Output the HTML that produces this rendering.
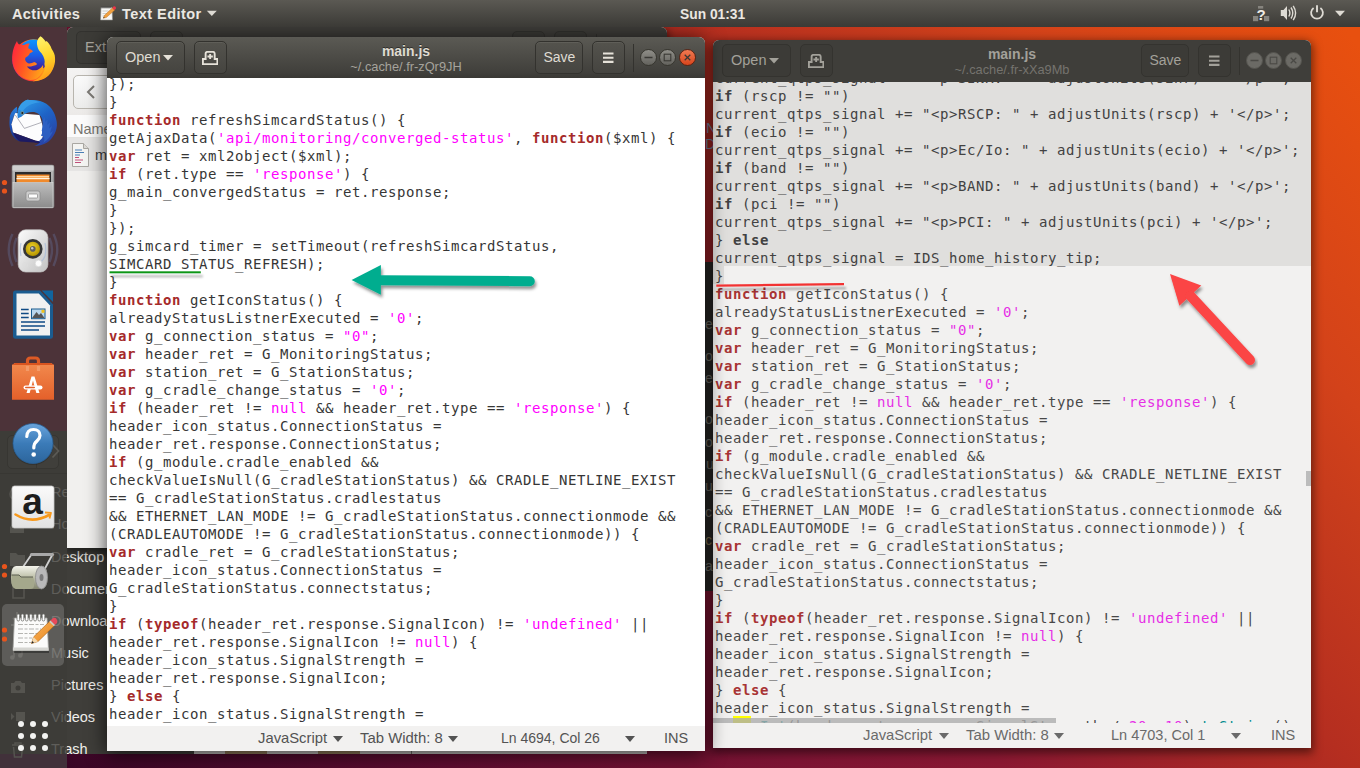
<!DOCTYPE html>
<html><head><meta charset="utf-8"><title>Text Editor</title>
<style>
*{box-sizing:border-box;margin:0;padding:0}
html,body{width:1360px;height:768px;overflow:hidden;background:#300a24}
body{position:relative;font-family:"Liberation Sans","DejaVu Sans",sans-serif;font-size:14px;color:#3c3c3c}
.abs{position:absolute}
#wall{left:0;top:0;width:1360px;height:768px;
 background:linear-gradient(48deg,#2c0420 0%,#3a0626 4%,#5e0c30 22%,#7c1433 39%,#8a1832 49%,#b52e20 66%,#c83c1c 77%,#d3421a 82%,#e8500f 98%);}
/* top bar */
#top{left:0;top:0;width:1360px;height:27px;background:linear-gradient(#5b5953,#3b3a36);color:#ebe8e2;font-weight:bold}
#top span{position:absolute;top:5.700px;white-space:nowrap;line-height:17px}
/* dock */
#dock{left:0;top:27px;width:67px;height:741px;overflow:hidden}
.dim{left:51px;font-size:14.5px;color:#5f5e5a;white-space:nowrap;width:16px;overflow:hidden}
/* windows */
.win{overflow:hidden;border-radius:6px 6px 0 0;box-shadow:0 3px 10px 2px rgba(0,0,0,.5)}
.hdr{left:0;top:0;width:100%;height:41px;background:linear-gradient(#56554f,#3d3c38);color:#dfdbd2}
.hb{position:absolute;top:4px;height:33px;border:1px solid #302f2c;border-radius:5px;background:linear-gradient(#4d4c47,#42413d);box-shadow:inset 0 1px 0 rgba(255,255,255,.06)}
.hb span{position:absolute;white-space:nowrap}
.hu{background:#3c3b37;border-color:#33322f;box-shadow:none}
.wb{position:absolute;width:17px;height:17px;border-radius:50%;background:linear-gradient(#8b8a85,#6c6b66);border:1px solid #33322f}
.ttl{position:absolute;left:0;width:100%;text-align:center;white-space:nowrap}
.code{font-family:"DejaVu Sans Mono","Liberation Mono",monospace;font-size:14px;line-height:18px;white-space:pre;color:#363636;letter-spacing:.572px}
.code .ln{height:18px}
.code b{color:#a52a2a}
.code i{color:#f0f;font-style:normal}
.code u{color:#008a8c;text-decoration:none}
.sel{color:#424242}
.w2c .sel b{color:inherit}
.w2c b{color:#a83434}
.w2c i{color:#e62ee6}
.sb{left:0;width:100%;height:26px;background:#f2f1f0;color:#535353}
.sb span{position:absolute;top:3px;white-space:nowrap;line-height:18px}
.sb2{color:#6a6a6a}
.sb2 .tri{border-top-color:#6a6a6a}
.tri{position:absolute;width:0;height:0;border-left:5px solid transparent;border-right:5px solid transparent;border-top:6px solid #535353}
</style></head><body>
<div id="wall" class="abs"></div>

<!-- dark window seen in the gap between editors -->
<div class="abs" style="left:700px;top:262px;width:20px;height:329px;background:#2b2a28"></div>
<div class="abs" style="left:705px;top:80px;width:9px;height:520px;overflow:hidden;font-size:14px;line-height:16px;color:#7f8dab">
 <span class="abs" style="left:1px;top:40px">Na</span><span class="abs" style="left:0;top:56px">Do</span>
 <span class="abs" style="left:0;top:236px;color:#77766f">e</span><span class="abs" style="left:0;top:268px;color:#77766f">o</span><span class="abs" style="left:0;top:290px;color:#77766f">e</span><span class="abs" style="left:0;top:331px;color:#77766f">o</span><span class="abs" style="left:0;top:354px;color:#77766f">o</span><span class="abs" style="left:1px;top:376px;color:#77766f">u</span><span class="abs" style="left:0;top:398px;color:#77766f">u</span><span class="abs" style="left:0;top:424px;color:#77766f">c</span><span class="abs" style="left:-3px;top:452px;color:#8a7a55">ic</span><span class="abs" style="left:0;top:478px;color:#77766f">a</span>
</div>

<!-- Files (nautilus) window -->
<div id="files" class="abs" style="left:0;top:431px;width:260px;height:323px;background:#3f3e3a;color:#f0efec">
 <div class="abs" style="left:0;top:0;width:260px;height:42px;background:linear-gradient(#4b4a45,#403f3b)"></div>
 <div class="abs" style="left:7px;top:4px;width:52px;height:34px;border:1px solid #33322f;border-radius:5px"></div>
 <div class="abs" style="left:36px;top:4px;width:1px;height:34px;background:#33322f"></div>
 <svg class="abs" style="left:48px;top:15px" width="10" height="14" viewBox="0 0 10 14"><path d="M2 1 L8 7 L2 13" fill="none" stroke="#8b8984" stroke-width="2"/></svg>
 <div class="abs" style="left:51px;top:53px;font-size:14.5px">Recent</div>
 <div class="abs" style="left:51px;top:85px;font-size:14.5px">Home</div>
 <div class="abs" style="left:51px;top:118px;font-size:14.5px">Desktop</div>
 <div class="abs" style="left:51px;top:150px;font-size:14.5px">Documents</div>
 <div class="abs" style="left:51px;top:182px;font-size:14.5px">Downloads</div>
 <div class="abs" style="left:51px;top:214px;font-size:14.5px">Music</div>
 <div class="abs" style="left:51px;top:246px;font-size:14.5px">Pictures</div>
 <div class="abs" style="left:51px;top:278px;font-size:14.5px">Videos</div>
 <div class="abs" style="left:51px;top:310px;font-size:14.5px">Trash</div>
</div>

<!-- Archive manager window -->
<div id="arch" class="abs win" style="left:67px;top:27px;width:600px;height:521px;background:#f1f0ee">
 <div class="abs hdr" style="background:#3f3e3a;color:#a8a59e"><div class="hb hu" style="left:9px;width:65px"><span style="left:8px;top:7px;font-size:14.500px;line-height:17px">Extract</span></div><div class="hb hu" style="left:83px;width:33px"></div><div class="hb hu" style="left:444.500px;width:33px"></div><div class="hb hu" style="left:486.500px;width:33px"></div><div class="abs" style="left:528.500px;top:7px;width:1px;height:28px;background:#33322f"></div></div>
 <div class="abs" style="left:0;top:41px;width:600px;height:47px;background:linear-gradient(#f4f3f2,#eceae8)"></div>
 <div class="abs" style="left:6px;top:48px;width:40px;height:34px;border:1px solid #b8b5ae;border-radius:5px;background:linear-gradient(#fafafa,#ececeb)"></div>
 <svg class="abs" style="left:19px;top:58px" width="10" height="14" viewBox="0 0 10 14"><path d="M8 1 L2 7 L8 13" fill="none" stroke="#7c7a75" stroke-width="2"/></svg>
 <div class="abs" style="left:0;top:88px;width:600px;height:23px;background:#fbfbfb;border-bottom:1px solid #e4e3e1"></div>
 <div class="abs" style="left:6px;top:94px;color:#77756f;font-size:14.5px">Name</div>
 <div class="abs" style="left:0;top:111px;width:600px;height:33px;background:#e6e5e4"></div>
 <svg class="abs" style="left:4px;top:116px" width="19" height="24" viewBox="0 0 19 24"><path d="M1.5 .5h11l5 5v18h-16z" fill="#f4f4f2" stroke="#a9a7a2"/><path d="M12.5 .5v5h5" fill="#dcdad6" stroke="#a9a7a2"/><path d="M4 7h7M4 9.5h9M4 12h5" stroke="#4a7fb5" stroke-width="1"/><path d="M4 14.500h4M4 17h8M4 19.500h6" stroke="#c0507a" stroke-width="1"/></svg>
 <div class="abs" style="left:28px;top:120px;font-size:14.5px;color:#3c3c3c">main.js</div>
</div>

<!-- gray window peeking under left editor -->
<div class="abs" style="left:194px;top:745px;width:453px;height:9px;background:#bdbbb8"></div>
<div class="abs" style="left:225px;top:745px;width:42px;height:9px;background:#8f7a5a"></div>
<div class="abs" style="left:318px;top:745px;width:42px;height:9px;background:#8f7a5a"></div>
<div class="abs" style="left:411px;top:745px;width:1px;height:9px;background:#6b6a66"></div>

<!-- RIGHT editor window (unfocused) -->
<div id="w2" class="abs win" style="left:713px;top:40px;width:598px;height:708px;background:#f2f1f0">
 <div class="abs hdr" style="height:42px;background:#3f3e3a;color:#a3a19a"><div class="hb" style="left:9px;width:69px;background:#3c3b37;border-color:#34332f;box-shadow:none"><span style="left:8px;top:7px;font-size:14.5px;line-height:17px">Open</span><svg class="abs" style="left:46px;top:13px" width="10" height="6"><path d="M0 0H10L5 5.500Z" fill="#a3a19a"/></svg></div><div class="hb" style="left:87px;width:33px;background:#3c3b37;border-color:#34332f;box-shadow:none"><svg class="abs" style="left:7.200px;top:9px" width="16.300" height="14.200" viewBox="0 0 18 16" preserveAspectRatio="none"><path d="M1 15 V9 H4 V3 Q4 1 6 1 H12 Q14 1 14 3 V9 H17 V15Z" fill="none" stroke="#a3a19a" stroke-width="2.100"/><path d="M9 3.400 V9 M6 6.200 H12" stroke="#a3a19a" stroke-width="2.100"/></svg></div><div class="ttl" style="top:5.500px;font-weight:bold;font-size:14px;line-height:17px;color:#a3a19a;text-shadow:none">main.js</div><div class="ttl" style="top:22px;font-size:12.8px;line-height:15px;color:#75736e">~/.cache/.fr-xXa9Mb</div><div class="hb" style="left:427.500px;width:48px;background:#3c3b37;border-color:#34332f;box-shadow:none"><span style="left:8px;top:7px;font-size:14px;line-height:17px">Save</span></div><div class="hb" style="left:484.500px;width:33px;background:#3c3b37;border-color:#34332f;box-shadow:none"><svg class="abs" style="left:10px;top:10px" width="11" height="11"><path d="M0 1.500H10.500M0 5.700H10.500M0 9.900H10.500" stroke="#a3a19a" stroke-width="2.100"/></svg></div><div class="abs" style="left:526px;top:7px;width:1px;height:28px;background:#34332f"></div><div class="wb" style="left:532.5px;top:12.400px;background:#6b6a65;border-color:#55544f"><svg class="abs" style="left:-1px;top:-1px" width="17" height="17"><path d="M4.500 8.500H12.500" stroke="#4a4945" stroke-width="1.300"/></svg></div><div class="wb" style="left:552.3px;top:12.400px;background:#6b6a65;border-color:#55544f"><svg class="abs" style="left:-1px;top:-1px" width="17" height="17"><rect x="5.200" y="5.200" width="6.600" height="6.600" fill="none" stroke="#4a4945" stroke-width="1.100"/></svg></div><div class="wb" style="left:572.3px;top:12.400px;background:#6b6a65;border-color:#55544f"><svg class="abs" style="left:-1px;top:-1px" width="17" height="17"><path d="M5.700 5.700L11.300 11.300M11.300 5.700L5.700 11.300" stroke="#4a4945" stroke-width="1.250"/></svg></div></div>
 <div class="abs" style="left:0;top:42px;width:598px;height:641px;overflow:hidden">
  <div class="abs" style="left:0;top:0;width:598px;height:184px;background:#e0dfdd"></div>
  <div class="abs" style="left:0;top:184px;width:11px;height:18px;background:#e0dfdd"></div>
  <div class="abs code w2c" style="left:2px;top:-13px;color:#484848"><div class="sel"><div class="ln">current_qtps_signal += "&lt;p&gt;SINR: " + adjustUnits(sinr) + '&lt;/p&gt;';</div><div class="ln"><b>if</b> (rscp != "")</div><div class="ln">current_qtps_signal += "&lt;p&gt;RSCP: " + adjustUnits(rscp) + '&lt;/p&gt;';</div><div class="ln"><b>if</b> (ecio != "")</div><div class="ln">current_qtps_signal += "&lt;p&gt;Ec/Io: " + adjustUnits(ecio) + '&lt;/p&gt;';</div><div class="ln"><b>if</b> (band != "")</div><div class="ln">current_qtps_signal += "&lt;p&gt;BAND: " + adjustUnits(band) + '&lt;/p&gt;';</div><div class="ln"><b>if</b> (pci != "")</div><div class="ln">current_qtps_signal += "&lt;p&gt;PCI: " + adjustUnits(pci) + '&lt;/p&gt;';</div><div class="ln">} <b>else</b></div><div class="ln">current_qtps_signal = IDS_home_history_tip;</div></div><div class="ln">}</div><div class="ln"><b>function</b> getIconStatus() {</div><div class="ln">alreadyStatusListnerExecuted = <i>'0'</i>;</div><div class="ln"><b>var</b> g_connection_status = <i>"0"</i>;</div><div class="ln"><b>var</b> header_ret = G_MonitoringStatus;</div><div class="ln"><b>var</b> station_ret = G_StationStatus;</div><div class="ln"><b>var</b> g_cradle_change_status = <i>'0'</i>;</div><div class="ln"><b>if</b> (header_ret != <i>null</i> &amp;&amp; header_ret.type == <i>'response'</i>) {</div><div class="ln">header_icon_status.ConnectionStatus =</div><div class="ln">header_ret.response.ConnectionStatus;</div><div class="ln"><b>if</b> (g_module.cradle_enabled &amp;&amp;</div><div class="ln">checkValueIsNull(G_cradleStationStatus) &amp;&amp; CRADLE_NETLINE_EXIST</div><div class="ln">== G_cradleStationStatus.cradlestatus</div><div class="ln">&amp;&amp; ETHERNET_LAN_MODE != G_cradleStationStatus.connectionmode &amp;&amp;</div><div class="ln">(CRADLEAUTOMODE != G_cradleStationStatus.connectionmode)) {</div><div class="ln"><b>var</b> cradle_ret = G_cradleStationStatus;</div><div class="ln">header_icon_status.ConnectionStatus =</div><div class="ln">G_cradleStationStatus.connectstatus;</div><div class="ln">}</div><div class="ln"><b>if</b> (<b>typeof</b>(header_ret.response.SignalIcon) != <i>'undefined'</i> ||</div><div class="ln">header_ret.response.SignalIcon != <i>null</i>) {</div><div class="ln">header_icon_status.SignalStrength =</div><div class="ln">header_ret.response.SignalIcon;</div><div class="ln">} <b>else</b> {</div><div class="ln">header_icon_status.SignalStrength =</div><div class="ln"><u>parseInt</u>(header_ret.response.SignalStrength / <i>20</i>, <i>10</i>).<u>toString</u>();</div></div>
  <div class="abs" style="left:20px;top:634px;width:18px;height:7px;background:#ff0"></div>
  <div class="abs" style="left:0;top:636px;width:343px;height:5px;background:rgba(172,172,172,.78)"></div>
  <div class="abs" style="left:593px;top:389px;width:5px;height:15px;background:#bcbcbc"></div>
 </div>
 <div class="abs sb sb2" style="top:683px">
  <span style="left:150px;font-size:14.8px">JavaScript</span><div class="tri" style="left:226px;top:10px"></div>
  <span style="left:253px;font-size:14.9px">Tab Width: 8</span><div class="tri" style="left:341px;top:10px"></div>
  <span style="left:398px;font-size:14.5px">Ln 4703, Col 1</span><div class="tri" style="left:518px;top:10px"></div>
  <span style="left:558px;font-size:14.5px">INS</span>
 </div>
</div>

<!-- LEFT editor window (focused) -->
<div id="w1" class="abs win" style="left:107px;top:37px;width:598px;height:714px;background:#fff;box-shadow:0 2px 20px 1px rgba(0,0,0,.7)">
 <div class="abs hdr" style="height:41px;background:linear-gradient(#5b5a54,#403f3b 88%,#393834);color:#dfdbd2"><div class="hb" style="left:9px;width:69px;background:linear-gradient(#54534d,#454440);border-color:#33322e;box-shadow:inset 0 1px 0 rgba(255,255,255,.07)"><span style="left:8px;top:7px;font-size:14.5px;line-height:17px">Open</span><svg class="abs" style="left:46px;top:13px" width="10" height="6"><path d="M0 0H10L5 5.500Z" fill="#e6e2d9"/></svg></div><div class="hb" style="left:87px;width:33px;background:linear-gradient(#54534d,#454440);border-color:#33322e;box-shadow:inset 0 1px 0 rgba(255,255,255,.07)"><svg class="abs" style="left:7.200px;top:9px" width="16.300" height="14.200" viewBox="0 0 18 16" preserveAspectRatio="none"><path d="M1 15 V9 H4 V3 Q4 1 6 1 H12 Q14 1 14 3 V9 H17 V15Z" fill="none" stroke="#e6e2d9" stroke-width="2.100"/><path d="M9 3.400 V9 M6 6.200 H12" stroke="#e6e2d9" stroke-width="2.100"/></svg></div><div class="ttl" style="top:5.500px;font-weight:bold;font-size:14px;line-height:17px;color:#dfdbd2;text-shadow:0 -1px rgba(0,0,0,.45)">main.js</div><div class="ttl" style="top:22px;font-size:12.8px;line-height:15px;color:#a5a39c">~/.cache/.fr-zQr9JH</div><div class="hb" style="left:427.500px;width:48px;background:linear-gradient(#54534d,#454440);border-color:#33322e;box-shadow:inset 0 1px 0 rgba(255,255,255,.07)"><span style="left:8px;top:7px;font-size:14px;line-height:17px">Save</span></div><div class="hb" style="left:484.500px;width:33px;background:linear-gradient(#54534d,#454440);border-color:#33322e;box-shadow:inset 0 1px 0 rgba(255,255,255,.07)"><svg class="abs" style="left:10px;top:10px" width="11" height="11"><path d="M0 1.500H10.500M0 5.700H10.500M0 9.900H10.500" stroke="#e6e2d9" stroke-width="2.100"/></svg></div><div class="abs" style="left:526px;top:7px;width:1px;height:28px;background:#33322e"></div><div class="wb" style="left:532.5px;top:12.400px;background:linear-gradient(#8f8e88,#63625d);border-color:#37362f"><svg class="abs" style="left:-1px;top:-1px" width="17" height="17"><path d="M4.500 8.500H12.500" stroke="#3a3935" stroke-width="1.300"/></svg></div><div class="wb" style="left:552.3px;top:12.400px;background:linear-gradient(#8f8e88,#63625d);border-color:#37362f"><svg class="abs" style="left:-1px;top:-1px" width="17" height="17"><rect x="5.200" y="5.200" width="6.600" height="6.600" fill="none" stroke="#3a3935" stroke-width="1.100"/></svg></div><div class="wb" style="left:572.3px;top:12.400px;background:linear-gradient(#f17a52,#d8451c);border-color:#5b2414"><svg class="abs" style="left:-1px;top:-1px" width="17" height="17"><path d="M5.700 5.700L11.300 11.300M11.300 5.700L5.700 11.300" stroke="#3a3935" stroke-width="1.250"/></svg></div></div>
 <div class="abs" style="left:0;top:41px;width:598px;height:648px;overflow:hidden;background:#fff">
  <div class="abs code" style="left:2px;top:-3px"><div class="ln">});</div><div class="ln">}</div><div class="ln"><b>function</b> refreshSimcardStatus() {</div><div class="ln">getAjaxData(<i>'api/monitoring/converged-status'</i>, <b>function</b>($xml) {</div><div class="ln"><b>var</b> ret = xml2object($xml);</div><div class="ln"><b>if</b> (ret.type == <i>'response'</i>) {</div><div class="ln">g_main_convergedStatus = ret.response;</div><div class="ln">}</div><div class="ln">});</div><div class="ln">g_simcard_timer = setTimeout(refreshSimcardStatus,</div><div class="ln">SIMCARD_STATUS_REFRESH);</div><div class="ln">}</div><div class="ln"><b>function</b> getIconStatus() {</div><div class="ln">alreadyStatusListnerExecuted = <i>'0'</i>;</div><div class="ln"><b>var</b> g_connection_status = <i>"0"</i>;</div><div class="ln"><b>var</b> header_ret = G_MonitoringStatus;</div><div class="ln"><b>var</b> station_ret = G_StationStatus;</div><div class="ln"><b>var</b> g_cradle_change_status = <i>'0'</i>;</div><div class="ln"><b>if</b> (header_ret != <i>null</i> &amp;&amp; header_ret.type == <i>'response'</i>) {</div><div class="ln">header_icon_status.ConnectionStatus =</div><div class="ln">header_ret.response.ConnectionStatus;</div><div class="ln"><b>if</b> (g_module.cradle_enabled &amp;&amp;</div><div class="ln">checkValueIsNull(G_cradleStationStatus) &amp;&amp; CRADLE_NETLINE_EXIST</div><div class="ln">== G_cradleStationStatus.cradlestatus</div><div class="ln">&amp;&amp; ETHERNET_LAN_MODE != G_cradleStationStatus.connectionmode &amp;&amp;</div><div class="ln">(CRADLEAUTOMODE != G_cradleStationStatus.connectionmode)) {</div><div class="ln"><b>var</b> cradle_ret = G_cradleStationStatus;</div><div class="ln">header_icon_status.ConnectionStatus =</div><div class="ln">G_cradleStationStatus.connectstatus;</div><div class="ln">}</div><div class="ln"><b>if</b> (<b>typeof</b>(header_ret.response.SignalIcon) != <i>'undefined'</i> ||</div><div class="ln">header_ret.response.SignalIcon != <i>null</i>) {</div><div class="ln">header_icon_status.SignalStrength =</div><div class="ln">header_ret.response.SignalIcon;</div><div class="ln">} <b>else</b> {</div><div class="ln">header_icon_status.SignalStrength =</div><div class="ln"><u>parseInt</u>(header_ret.response.SignalStrength / <i>20</i>, <i>10</i>).<u>toString</u>();</div></div>
 </div>
 <div class="abs sb" style="top:689px">
  <span style="left:151px;font-size:14.8px">JavaScript</span><div class="tri" style="left:226px;top:10px"></div>
  <span style="left:253px;font-size:14.9px">Tab Width: 8</span><div class="tri" style="left:341px;top:10px"></div>
  <span style="left:394px;font-size:14px">Ln 4694, Col 26</span><div class="tri" style="left:518px;top:10px"></div>
  <span style="left:557px;font-size:14.5px">INS</span>
 </div>
</div>

<!-- dock -->
<div id="dock" class="abs">
 <div class="abs" style="left:0;top:0;width:67px;height:404px;background:#4c3339"></div>
 <div class="abs" style="left:0;top:404px;width:67px;height:323px;background:#3d3c38"></div>
 <div class="abs" style="left:0;top:727px;width:67px;height:14px;background:#41313a"></div>
 <!-- files window seen through the dock -->
 <div class="abs" style="left:7px;top:408px;width:52px;height:34px;border:1px solid #373632;border-radius:5px;background:#403f3b"></div>
 <div class="abs" style="left:36px;top:408px;width:1px;height:34px;background:#373632"></div>
 <div class="abs" style="left:0;top:446px;width:67px;height:1px;background:#383733"></div>
 <svg class="abs" style="left:51px;top:416px" width="9" height="16" viewBox="0 0 9 16"><path d="M1.500 1.500 L7.500 8 L1.500 14.500" fill="none" stroke="#5b5a55" stroke-width="1.800"/></svg>
 <div class="abs dim" style="top:457px">Re</div>
 <div class="abs dim" style="top:489px">Ho</div>
 <div class="abs dim" style="top:522px">De</div>
 <div class="abs dim" style="top:554px">Do</div>
 <div class="abs dim" style="top:586px">Do</div>
 <div class="abs dim" style="top:618px">Mu</div>
 <div class="abs dim" style="top:650px">Pic</div>
 <div class="abs dim" style="top:682px">Vid</div>
 <div class="abs dim" style="top:714px">Tra</div>
<svg class="abs" style="left:0;top:0" width="67" height="741" viewBox="0 27 67 741" fill="#55544f" stroke="none">
  <circle cx="16" cy="494" r="6" fill="none" stroke="#55544f" stroke-width="1.600"/>
  <path d="M10 527 L17 520 L24 527 V533 H10Z"/>
  <path d="M10 553 H16 L18 555 H25 V566 H10Z"/>
  <path d="M13 584 H21 L24 587 V598 H13Z" fill="none" stroke="#55544f" stroke-width="1.600"/>
  <path d="M17 612 V621 M13 618 L17 622 L21 618 M11 625 H23" fill="none" stroke="#55544f" stroke-width="1.800"/>
  <path d="M14 647 V657 M22 645 V655 M14 647 L22 645" fill="none" stroke="#55544f" stroke-width="1.600"/><circle cx="12.300" cy="657.500" r="2.300"/><circle cx="20.300" cy="655.500" r="2.300"/>
  <path d="M11 683 H14 L15.500 681 H20.500 L22 683 H25 V693 H11Z"/><circle cx="18" cy="688" r="2.500" fill="#3d3c38"/>
  <path d="M11 713 L14.500 716.500 L11 720Z M16 712 H25 V721 H16Z"/>
  <path d="M12 745 H24 M15 745 V743 H21 V745 M13.500 747 L14.500 757 H21.500 L22.500 747" fill="none" stroke="#55544f" stroke-width="1.500"/>
 </svg>
 <svg class="abs" style="left:0;top:0" width="67" height="741" viewBox="0 27 67 741">
<defs>
 <linearGradient id="ffr" x1="1" y1="0.35" x2="0" y2="0.65"><stop offset="0" stop-color="#ffd12e"/><stop offset=".35" stop-color="#ff9a1a"/><stop offset=".7" stop-color="#ff3a2c"/><stop offset="1" stop-color="#d4169a"/></linearGradient><linearGradient id="fft" x1="0.4" y1="0" x2="0.6" y2="1"><stop offset="0" stop-color="#fff36b"/><stop offset=".5" stop-color="#ffd52a"/><stop offset="1" stop-color="#ff9416"/></linearGradient>
 <linearGradient id="ffb" x1="0.5" y1="0" x2="0.5" y2="1"><stop offset="0" stop-color="#0a96ff"/><stop offset=".5" stop-color="#1a5ee6"/><stop offset=".85" stop-color="#3a2aa8"/><stop offset="1" stop-color="#3a1a8c"/></linearGradient>
 <linearGradient id="fff" x1="0" y1="0.3" x2="1" y2="0.7"><stop offset="0" stop-color="#ff2a3c"/><stop offset=".45" stop-color="#ff5a22"/><stop offset="1" stop-color="#ffa41a"/></linearGradient>
 <linearGradient id="tbb" x1="0.2" y1="0" x2="0.8" y2="1"><stop offset="0" stop-color="#2b97e6"/><stop offset=".45" stop-color="#1e63c6"/><stop offset="1" stop-color="#2b3ea0"/></linearGradient><linearGradient id="tbl" x1="0" y1="0" x2="0" y2="1"><stop offset="0" stop-color="#2a80dc"/><stop offset=".6" stop-color="#1b4fb4"/><stop offset="1" stop-color="#1a2a7e"/></linearGradient>
 <linearGradient id="cab" x1="0" y1="0" x2="0" y2="1"><stop offset="0" stop-color="#bdbdbd"/><stop offset="1" stop-color="#8c8c8c"/></linearGradient>
 <linearGradient id="spk" x1="0" y1="0" x2="1" y2="1"><stop offset="0" stop-color="#fbfbfb"/><stop offset="1" stop-color="#c2c2c2"/></linearGradient>
 <radialGradient id="cone" cx=".45" cy=".4" r=".6"><stop offset="0" stop-color="#f2d52c"/><stop offset="1" stop-color="#b39400"/></radialGradient>
 <linearGradient id="bag" x1="0" y1="0" x2="0" y2="1"><stop offset="0" stop-color="#f28a4e"/><stop offset="1" stop-color="#e4602a"/></linearGradient>
 <linearGradient id="hlp" x1="0" y1="0" x2="0" y2="1"><stop offset="0" stop-color="#6aa4dc"/><stop offset=".5" stop-color="#3b7bb8"/><stop offset="1" stop-color="#2c659c"/></linearGradient>
 <linearGradient id="amz" x1="0" y1="0" x2="0" y2="1"><stop offset="0" stop-color="#fafafa"/><stop offset="1" stop-color="#e2e2e2"/></linearGradient>
 <linearGradient id="rol" x1="0" y1="0" x2="0" y2="1"><stop offset="0" stop-color="#f4f4ec"/><stop offset=".45" stop-color="#c2c4ae"/><stop offset="1" stop-color="#85876f"/></linearGradient>
 <linearGradient id="pen" x1="0" y1="0" x2="1" y2="1"><stop offset="0" stop-color="#fbb45a"/><stop offset="1" stop-color="#e8861e"/></linearGradient>
</defs>
<!-- Firefox -->
<g>
 <circle cx="33.300" cy="60.300" r="21" fill="url(#ffr)"/>
 <circle cx="33.500" cy="55.600" r="16" fill="url(#ffb)"/>
 <path d="M12.300 60 C11.800 52 14 46 17 40.900 C17.500 43 18.500 44 19.600 44.600 C21 44.300 22.500 44.600 24 45 C25.500 44 27.500 43.400 29.800 43.500 C28.800 45 28.300 46.500 28.300 48.200 C30 49 31.800 50 33.100 51.200 C32 52.300 30.800 52.900 29.800 53.300 C29.300 54.500 28.500 55.500 27.600 56.300 C26.800 56.700 26 57.200 25.400 57.700 C25 58.800 25 59.700 25.400 60.600 C26.300 62.300 27.600 63.300 29.100 63.600 C31 63.500 32.800 63 34.200 62.100 C35.400 62.500 36.400 63.100 37.100 63.900 C36.200 64.900 35 65.500 33.400 65.700 C31.200 66.500 29 66.800 26.900 66.500 C28 68 29.200 68.900 30.500 69.400 C33 70.600 35.500 70.500 37.800 69.800 C40 68.700 41.800 67 42.900 65 C44 69 42 75 36 79 C24 83 13 73 12.300 60Z" fill="url(#fff)"/>
 <path d="M40.400 36.200 C42.500 37.500 44.500 39.500 45.800 41.700 L46.600 40.900 C49 43 50.800 46 51.700 49 C53.800 52 55 55 55 57.700 C55.300 61 54.800 64 53.900 66.500 C52.800 70 51 73 48.800 75.200 C46.500 77.500 44 79 41.500 79.600 C38 81 35 81.300 33 81.200 C38 79.500 42 76 44 71.500 C45 69 45 66.500 44.400 64 C44.800 62.500 44.800 60.800 44.400 59.200 C43.800 57 42.800 55 41.500 53.300 C39.500 51.500 38 49.200 37.500 46.800 C36.900 44.800 36.800 42.800 37.100 40.900 C37.900 39 39 37.400 40.400 36.200Z" fill="url(#fft)"/>
</g>
<!-- Thunderbird -->
<g>
 <path d="M16.800 106.800 C12 110 9.500 115 9.700 119 C9 124 9.500 131 13.100 136.300 C15 139 17.500 141 20.200 141.600 C19.500 139.500 19.300 138 19.100 136.300 L13.100 132.500 L11.600 124.200 L13.800 115.900 L17.600 111.400Z" fill="url(#tbl)"/>
 <path d="M15.300 112.900 L39.500 115.100 L44 130.300 L41.800 141.600 L35.700 140.800 L13 132.500 L11.500 124.200 L13.800 116.700Z" fill="#fcfcfd"/>
 <path d="M15.300 115 L24.400 128.400 L41.800 122.300" fill="none" stroke="#8e8e99" stroke-width=".7"/>
 <path d="M13 132.500 L35.700 140.800 L41.800 141.600 L41.500 143 C38 143.500 36 143 34 142.500 L20.200 141.600 C17 139.500 14.500 136.500 13 132.500Z" fill="#1c1a63"/>
 <path d="M18 118.200 C17 115 17.500 112 18.300 109.100 C20 104 23.500 101 27.400 99.700 L29.700 100 C36 99.500 42 100.500 46.300 103.800 C51.500 107.500 55 113 56.100 118.900 C56.800 121 57 123.500 56.900 125.700 C56.500 129.500 55.500 133 53.100 136.300 C51.500 139 49 141.500 46.300 143.100 C42.500 145 38.500 146 34.200 146.100 C37 145 39 143.800 40.300 142.300 L38.500 141.500 C40.500 140 42.300 138.200 43.300 136.300 L41.200 135.800 C42.300 134 42.300 132 41.800 130.300 C42.800 127 43 123.500 42.500 120.400 C42 118 41 116.500 39.500 115.100 C38 113.300 36 112.500 34.200 112.100 C31.500 111.800 29 112.200 26.700 112.900 C24.500 113.800 22.800 115.200 21.400 116.700Z" fill="url(#tbb)"/>
 <path d="M42.500 120.400 L45 117 L45 122 L47.500 119.500 L47.300 125 L50 122.500 L49 128.500 L52 126 L50 133 L53 131 C51 136 48 140 43.300 143 C44.500 141 45 138.500 43.300 136.300 L41.200 135.800 C42.300 134 42.300 132 41.800 130.300 C42.800 127 43 123.500 42.500 120.400Z" fill="#2f62c4" opacity=".85"/>
 <path d="M18.300 109.100 C20 104 23.500 101 27.400 99.700 L29.700 100 C34 100 37 101 40 102.500 C34 102.500 27 105 22.500 111.500Z" fill="#3aa0ea" opacity=".8"/>
 <circle cx="22.300" cy="113" r="1.100" fill="#1a1a1a"/><circle cx="22.300" cy="113" r="1.500" fill="none" stroke="#c9a23a" stroke-width=".4"/>
</g>
<!-- Files -->
<g>
 <rect x="12" y="165" width="42" height="43" rx="2" fill="url(#cab)" stroke="#6f6f6f" stroke-width=".8"/>
 <rect x="12.500" y="165.500" width="41" height="5" fill="#cfcfcf"/>
 <rect x="15" y="172" width="36" height="10.500" fill="#2b2b2b"/>
 <rect x="16.500" y="174.500" width="33" height="8" fill="#f08a2c"/>
 <rect x="17" y="176" width="32" height="1.500" fill="#ffd7a1"/>
 <rect x="16.500" y="178" width="33" height="1.200" fill="#fff3e0"/>
 <rect x="13" y="182.500" width="40" height="25" fill="url(#cab)" stroke="#d9d9d9" stroke-width=".6"/>
 <rect x="26" y="191" width="14" height="10" rx="2" fill="#cdcdcd" stroke="#8a8a8a" stroke-width=".7"/>
 <rect x="28.500" y="194" width="9" height="4" rx=".8" fill="#fdfdfd" stroke="#777" stroke-width=".6"/>
 <circle cx="4.500" cy="182.500" r="2.600" fill="#e8541c"/><circle cx="4.500" cy="191" r="2.600" fill="#e8541c"/>
</g>
<!-- Rhythmbox -->
<g>
 <path d="M16.500 238 Q11.500 249 16.500 262 M12.500 234 Q5 249 12.500 266" stroke="#65719c" stroke-width="2.400" fill="none" opacity=".38"/>
 <path d="M49.500 238 Q54.500 249 49.500 262 M53.500 234 Q61 249 53.500 266" stroke="#65719c" stroke-width="2.400" fill="none" opacity=".38"/>
 <rect x="18.200" y="229.800" width="29.700" height="42.200" rx="7.500" fill="url(#spk)" stroke="#c4c4c4" stroke-width=".7"/>
 <path d="M21 243 Q19.500 249 21 256 M45 243 Q46.500 249 45 256 M41 262 Q44 259 45 256" stroke="#9fb4d8" stroke-width="1.200" fill="none" opacity=".6"/>
 <circle cx="32.800" cy="248.900" r="9.800" fill="#353535"/>
 <circle cx="32.800" cy="248.900" r="7.200" fill="url(#cone)"/>
 <circle cx="32.800" cy="248.900" r="2.800" fill="#5f5f5f"/><circle cx="32.200" cy="248.200" r="1.200" fill="#c8c8c8"/>
 <circle cx="38.500" cy="263.400" r="3.300" fill="#fbfbfb" stroke="#d2d2d2" stroke-width=".6"/>
 <rect x="23" y="262.500" width="4.500" height="4.500" rx="1" fill="none" stroke="#dcdcdc" stroke-width=".7"/>
</g>
<!-- LibreOffice Writer -->
<g>
 <path d="M15.500 290.500 H40 L53 304.500 V336.500 Q53 338.800 50.500 338.800 H15.500 Q13 338.800 13 336.500 V293 Q13 290.500 15.500 290.500Z" fill="#1b5c90"/>
 <path d="M16.500 293.500 H38.800 L50 305.500 V335.500 H16.500Z" fill="#f1f1f1"/>
 <path d="M41.700 290.500 H53 V302Z" fill="#11659f"/>
 <path d="M21 309.500h7.700M21 313.500h7.700M21 317.500h7.700M21 322h24M21 326h24M21 330h18" stroke="#0f4a85" stroke-width="1.700"/>
 <rect x="31.500" y="309" width="13.500" height="9.700" fill="#b9d6ec" stroke="#1b5c90" stroke-width="1"/>
 <path d="M32 318 L36.500 312 L39 315 L41 313 L44.500 318Z" fill="#555"/>
 <rect x="41.500" y="309.800" width="3" height="3" fill="#f2c21a"/>
</g>
<!-- Ubuntu Software -->
<g>
 <path d="M27.500 371 V361 Q27.500 358 30.500 358 H35.500 Q38.500 358 38.500 361 V371" fill="none" stroke="#dd5a25" stroke-width="3.200"/>
 <path d="M12 365 L15 363 H51 L54 365 V399.700 H12Z" fill="url(#bag)"/>
 <path d="M12 365 L15 363 H51 L54 365Z" fill="#d9541f"/>
 <path d="M27.500 366 V371 M38.500 366 V371" stroke="#f39a68" stroke-width="3.200"/>
 <path d="M26.500 393 L31.500 376.500 H34.500 L39.500 393 H36.300 L33 380.500 L29.700 393Z" fill="#fff"/>
 <rect x="23.500" y="385.500" width="19" height="4" rx="2" fill="#fff"/>
 <rect x="25" y="386.700" width="10" height="1.600" rx=".8" fill="#e4602a"/>
</g>
<!-- Help -->
<g>
 <circle cx="33" cy="444.500" r="20.500" fill="#000" opacity=".18"/>
 <circle cx="33" cy="443.500" r="20" fill="url(#hlp)" stroke="#2a5f94" stroke-width=".8"/>
 <path d="M26.800 436.500 C27 431.500 30 429.500 33.500 429.500 C37.500 429.500 40 432 40 435.500 C40 439.500 36 441 34.500 444 C34 445.300 33.800 446.500 33.800 448" fill="none" stroke="#fff" stroke-width="3.200" stroke-linecap="round"/>
 <circle cx="33.700" cy="454.500" r="2.300" fill="#fff"/>
</g>
<!-- Amazon -->
<g>
 <rect x="12" y="486" width="42" height="42" rx="2.500" fill="url(#amz)" stroke="#c9c9c9" stroke-width=".8"/>
 <text x="32.500" y="514" text-anchor="middle" font-family="Liberation Sans, sans-serif" font-weight="bold" font-size="37" fill="#1d1d1d">a</text>
 <path d="M15.500 514.500 Q32 524.500 49 515" fill="none" stroke="#f7991c" stroke-width="2.600" stroke-linecap="round"/>
 <path d="M45 512.500 L51 512.800 L49.500 518.500" fill="none" stroke="#f7991c" stroke-width="1.800" stroke-linejoin="round"/>
</g>
<!-- File roller -->
<g>
 <path d="M23 567 L31.500 554.500 H52.500 L41.500 575" fill="none" stroke="#cfcfcf" stroke-width="1.800" stroke-linejoin="round"/>
 <path d="M31.500 554.500 H52.500" stroke="#a9a9a9" stroke-width="3.200" stroke-linecap="round"/>
 <path d="M16 566 H41 Q47.500 566 47.500 577.500 Q47.500 589 41 589 H16 Q11 589 11 577.500 Q11 566 16 566Z" fill="url(#rol)"/>
 <path d="M11.500 575 H19 L21 577 H33 L34 580 V586 Q34 589 30 589 H16 Q11.500 588 11.500 580Z" fill="#a5a88c"/>
 <path d="M11.500 575 H19 L21 577 H33" fill="none" stroke="#5c5e50" stroke-width="1"/>
 <ellipse cx="41.500" cy="577.500" rx="6" ry="11.500" fill="#b9b9b9" stroke="#8a8a8a" stroke-width=".8"/>
 <ellipse cx="41.500" cy="577.500" rx="2" ry="3.500" fill="#7a7a7a"/>
 <circle cx="4.500" cy="566.500" r="2.600" fill="#e8541c"/><circle cx="4.500" cy="575" r="2.600" fill="#e8541c"/>
</g>
<!-- Gedit (active) -->
<g>
 <rect x="2" y="604" width="62" height="62" rx="5" fill="#fff" opacity=".17"/>
 <rect x="14" y="651" width="35" height="2" fill="#000" opacity=".35"/>
 <path d="M14.500 618 H47 L48.500 650.500 H13Z" fill="#fbfbfa" stroke="#a6a6a2" stroke-width=".8"/>
 <path d="M13 647.500 H48.400 L48.500 650.500 H13Z" fill="#d6d6d2"/>
 <path d="M18 624.500h26M18 629h23M18 633.500h25M18 638h14M18 642.500h16" stroke="#b4b4b0" stroke-width="1.100" stroke-dasharray="5 1.500 3 1.500"/>
 <g fill="#fff" stroke="#6e6e6a" stroke-width=".8"><rect x="17" y="614" width="2.600" height="7" rx="1.300"/><rect x="21.200" y="614" width="2.600" height="7" rx="1.300"/><rect x="25.400" y="614" width="2.600" height="7" rx="1.300"/><rect x="29.600" y="614" width="2.600" height="7" rx="1.300"/><rect x="33.800" y="614" width="2.600" height="7" rx="1.300"/><rect x="38" y="614" width="2.600" height="7" rx="1.300"/><rect x="42.200" y="614" width="2.600" height="7" rx="1.300"/></g>
 <path d="M31.500 643.500 L33.500 637 L50.500 620.500 L55 625 L38 641.500Z" fill="url(#pen)" stroke="#a65e10" stroke-width=".6"/>
 <path d="M31.500 643.500 L33.500 637 L38 641.500Z" fill="#f3d9b0"/>
 <path d="M31.500 643.500 L32.300 641 L34 642.700Z" fill="#222"/>
 <path d="M50.500 620.500 L52.500 618.500 Q55 617 56.500 619 Q58 621 57 623 L55 625Z" fill="#e84a5a"/>
 <path d="M49.300 621.700 L50.500 620.500 L55 625 L53.800 626.200Z" fill="#c9c9c9"/>
 <circle cx="4.500" cy="630" r="2.600" fill="#e8541c"/><circle cx="4.500" cy="639" r="2.600" fill="#e8541c"/>
</g>
<!-- App grid -->
<g fill="#f3f3f1">
 <circle cx="21" cy="724" r="3"/><circle cx="33" cy="724" r="3"/><circle cx="45" cy="724" r="3"/>
 <circle cx="21" cy="736" r="3"/><circle cx="33" cy="736" r="3"/><circle cx="45" cy="736" r="3"/>
 <circle cx="21" cy="748" r="3"/><circle cx="33" cy="748" r="3"/><circle cx="45" cy="748" r="3"/>
</g>

 </svg>
</div>

<!-- top bar -->
<div id="top" class="abs">
 <span style="left:12px;font-size:14.5px;letter-spacing:.38px">Activities</span>
 <span style="left:122px;font-size:14.5px;letter-spacing:.45px">Text Editor</span>
 <span style="left:680px;font-size:13.8px">Sun 01:31</span>
 <svg class="abs" style="left:0;top:0" width="1360" height="27" viewBox="0 0 1360 27">
  <!-- gedit mini icon -->
  <path d="M101 7.500 H112 L112.500 20 H100.500Z" fill="#f7f7f5" stroke="#8d8d89" stroke-width=".6"/>
  <path d="M102 6.200v2.300M104 6.200v2.300M106 6.200v2.300M108 6.200v2.300M110 6.200v2.300" stroke="#444" stroke-width=".9"/>
  <path d="M102.500 11h6M102.500 13.500h5M102.500 16h3" stroke="#c2c2be" stroke-width=".8"/>
  <path d="M103.300 18.300 L104.300 15.500 L112.500 7.800 L114.800 10 L106.300 17.500Z" fill="#f0a040" stroke="#a9651a" stroke-width=".4"/>
  <path d="M103.300 18.300 L103.800 17 L104.700 17.800Z" fill="#222"/>
  <circle cx="114.300" cy="8" r="1.700" fill="#e8354a"/>
  <!-- app menu arrow -->
  <path d="M206.800 10.800 H216.800 L211.800 16Z" fill="#dedbd4"/>
  <!-- network -->
  <rect x="1258" y="6" width="5.200" height="2.600" fill="#86847e"/>
  <rect x="1253" y="16" width="5.200" height="5.200" fill="#86847e"/>
  <rect x="1264" y="16" width="5.200" height="5.200" fill="#86847e"/>
  <text x="1261" y="19.800" text-anchor="middle" font-family="Liberation Sans, sans-serif" font-weight="bold" font-size="15" fill="#eeece6">?</text>
  <!-- volume -->
  <path d="M1280.800 10 H1283.500 L1287 6 V20 L1283.500 16 H1280.800Z" fill="#dedbd4"/>
  <path d="M1288.800 9.500 Q1291 13 1288.800 16.500 M1291 7.500 Q1294.500 13 1291 18.500 M1293.200 5.800 Q1298 13 1293.200 20.200" fill="none" stroke="#dedbd4" stroke-width="1.400"/>
  <!-- power -->
  <path d="M1313.600 8 A5.900 5.900 0 1 0 1320.400 8" fill="none" stroke="#dedbd4" stroke-width="1.800"/>
  <path d="M1317 5.200 V12.200" stroke="#dedbd4" stroke-width="1.900"/>
  <path d="M1335 10.800 H1345 L1340 16.300Z" fill="#dedbd4"/>
 </svg>
</div>

<!-- annotations -->
<svg class="abs" style="left:0;top:0" width="1360" height="768" viewBox="0 0 1360 768">
 <defs>
  <filter id="sh" x="-10%" y="-40%" width="120%" height="200%"><feDropShadow dx="1.500" dy="3" stdDeviation="1.800" flood-color="#000" flood-opacity=".42"/></filter>
  <filter id="sl" x="-5%" y="-400%" width="110%" height="1200%"><feDropShadow dx="2" dy="4" stdDeviation="1.300" flood-color="#000" flood-opacity=".3"/></filter>
 </defs>
 <g filter="url(#sl)">
  <rect x="109.500" y="271.300" width="91.300" height="2" fill="#0d9618"/>
 </g>
 <g filter="url(#sh)" fill="#06ad8f" stroke="none">
  <path d="M351.600 280 L380.900 265 L380.900 294.800Z"/>
  <path d="M380 275.200 L529.800 276.200 A5 5 0 0 1 529.800 286.200 L380 285.200Z"/>
 </g>
 <g filter="url(#sl)">
  <path d="M716.300 284.600 L844 283 L844 285.200 L716.300 286.800Z" fill="#f23030"/>
 </g>
 <g filter="url(#sh)" fill="#fb4444">
  <path d="M1170 274 L1201.250 285.500 L1179.400 305.800Z"/>
  <path d="M1190.300 295.600 L1250 360" stroke="#fb4444" stroke-width="10" stroke-linecap="round" fill="none"/>
 </g>
</svg>
</body></html>
